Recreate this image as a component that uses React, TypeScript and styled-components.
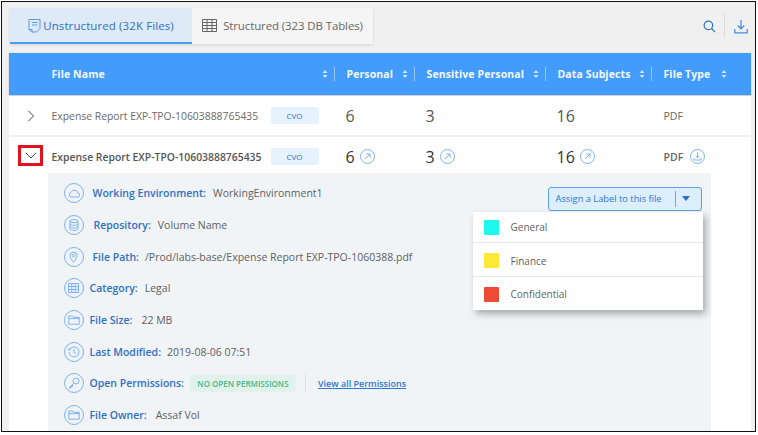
import * as React from 'react';
import styled, { createGlobalStyle } from 'styled-components';

const blue = '#2f6fc4';
const ringBlue = '#7fb2f5';

const GlobalStyle = createGlobalStyle`
    html, body {
        margin: 0;
        background: #fff;
        font-family: "Open Sans", "Liberation Sans", sans-serif;
    }
`;

const Frame = styled.div`
    box-sizing: border-box;
    position: relative;
    width: 755px;
    height: 431px;
    margin: 1px 0 0 1px;
    border: 1.5px solid #111;
    background: #f0f0f0;
    overflow: hidden;
`;

const TopBar = styled.div`
    display: flex;
    align-items: flex-start;
    justify-content: space-between;
    height: 51px;
    box-sizing: border-box;
    padding: 6px 7.5px 0 8px;
`;

const Tabs = styled.div`
    display: flex;
    box-shadow: 0 1px 3px rgba(0, 0, 0, 0.12);
    border-radius: 3px 3px 0 0;
`;

const Tab = styled.div<{ $active?: boolean }>`
    box-sizing: border-box;
    display: flex;
    align-items: center;
    justify-content: center;
    gap: ${({ $active }) => ($active ? '2px' : '6px')};
    width: ${({ $active }) => ($active ? '182px' : '181px')};
    height: 36px;
    font-size: 11.5px;
    letter-spacing: ${({ $active }) => ($active ? '0.1px' : '-0.12px')};
    color: ${({ $active }) => ($active ? blue : '#666')};
    background: ${({ $active }) => ($active ? '#deebf6' : '#f5f5f5')};
    border-bottom: 2px solid ${({ $active }) => ($active ? '#4a9bf5' : '#f5f5f5')};
`;

const Tools = styled.div`
    display: flex;
    align-items: center;
    gap: 8.5px;
    height: 24px;
    margin-top: 6px;
`;

const ToolDivider = styled.div`
    width: 1px;
    height: 24px;
    background: #dcdcdc;
`;

const Table = styled.div`
    width: 742px;
    margin-left: 6.5px;
`;

const columns = '43px 282px 80px 131px 106px 82px';

const HeaderRow = styled.div`
    display: grid;
    grid-template-columns: ${columns};
    height: 42px;
    align-items: center;
    background: #439bfb;
    box-shadow: 0 1px 2px rgba(0, 0, 0, 0.2);
`;

const HeaderCell = styled.div<{ $divided?: boolean }>`
    display: flex;
    align-items: center;
    justify-content: space-between;
    height: 14px;
    box-sizing: border-box;
    padding: 0 6px 0 ${({ $divided }) => ($divided ? '12px' : '0')};
    border-left: ${({ $divided }) => ($divided ? '1px solid rgba(255, 255, 255, 0.45)' : 'none')};
    font-size: 10.5px;
    font-weight: 700;
    letter-spacing: 0.1px;
    color: #f4f9ff;
`;

const DataRow = styled.div<{ $open?: boolean }>`
    box-sizing: border-box;
    display: grid;
    grid-template-columns: ${columns};
    align-items: center;
    height: ${({ $open }) => ($open ? '36px' : '41px')};
    margin-top: ${({ $open }) => ($open ? '0' : '1px')};
    padding-top: ${({ $open }) => ($open ? '3px' : '0')};
    background: #fff;
    border-bottom: ${({ $open }) => ($open ? 'none' : '2px solid #f0f0f0')};
    color: #555;
`;

const ChevronCell = styled.div`
    display: flex;
    justify-content: center;
    padding-left: 1px;
`;

const RedBox = styled.div`
    box-sizing: border-box;
    display: flex;
    align-items: center;
    justify-content: center;
    width: 25px;
    height: 21px;
    margin-bottom: 3px;
    border: 3px solid #e2121f;
`;

const NameCell = styled.div<{ $bold?: boolean }>`
    display: flex;
    align-items: center;
    font-size: 10.4px;
    font-weight: ${({ $bold }) => ($bold ? 600 : 400)};
    color: ${({ $bold }) => ($bold ? '#555' : '#6a6a6a')};
`;

const NameText = styled.span`
    width: 219px;
    white-space: nowrap;
`;

const SourceBadge = styled.span`
    display: flex;
    align-items: center;
    justify-content: center;
    width: 48px;
    height: 17px;
    background: #e6f2fd;
    border-radius: 2px;
    font-size: 8px;
    font-weight: 400;
    color: ${blue};
`;

const CountCell = styled.div<{ $bold?: boolean }>`
    display: flex;
    align-items: center;
    gap: 5px;
    padding-left: 12px;
    font-size: 16px;
    color: ${({ $bold }) => ($bold ? '#333' : '#555')};
`;

const TypeCell = styled.div<{ $bold?: boolean }>`
    display: flex;
    align-items: center;
    gap: 7px;
    padding-left: 13px;
    font-size: 10.5px;
    font-weight: ${({ $bold }) => ($bold ? 600 : 400)};
    color: #666;
`;

const TableBody = styled.div`
    background: #fff;
    padding-bottom: 20px;
`;

const Details = styled.div`
    position: relative;
    box-sizing: border-box;
    display: flex;
    flex-direction: column;
    width: 663px;
    margin-left: 39px;
    padding: 4.4px 0 0 16px;
    background: #f0f4f7;
`;

const DetailRow = styled.div`
    display: flex;
    align-items: center;
    height: 31.7px;
`;

const CircleIcon = styled.div<{ $small?: boolean }>`
    box-sizing: border-box;
    display: flex;
    align-items: center;
    justify-content: center;
    width: ${({ $small }) => ($small ? '15px' : '20px')};
    height: ${({ $small }) => ($small ? '15px' : '20px')};
    border: 1px solid ${ringBlue};
    border-radius: 50%;
    flex: none;
`;

const DetailLabel = styled.span<{ $indent: number }>`
    margin-left: ${({ $indent }) => $indent}px;
    font-size: 10.5px;
    font-weight: 600;
    color: ${blue};
    white-space: nowrap;
`;

const DetailValue = styled.span<{ $gap: number }>`
    margin-left: ${({ $gap }) => $gap}px;
    font-size: 10.5px;
    color: #5f5f5f;
    white-space: nowrap;
`;

const PermissionBadge = styled.span`
    display: flex;
    align-items: center;
    justify-content: center;
    width: 106px;
    height: 17px;
    margin-left: 6px;
    background: #e0f2ea;
    border-radius: 3px;
    font-size: 8px;
    font-weight: 600;
    color: #45b88a;
    white-space: nowrap;
`;

const PermissionDivider = styled.div`
    width: 1px;
    height: 18px;
    margin: 0 12px 0 9px;
    background: #dfe2e5;
`;

const PermissionLink = styled.a`
    font-size: 9px;
    font-weight: 600;
    color: #2f78d4;
    text-decoration: underline;
    white-space: nowrap;
`;

const LabelButton = styled.div`
    position: absolute;
    top: 13.5px;
    left: 500px;
    box-sizing: border-box;
    display: flex;
    align-items: center;
    width: 154px;
    height: 24px;
    padding-left: 7px;
    background: #ddeefc;
    border: 1px solid #5f9fe8;
    border-radius: 3px;
    font-size: 9.3px;
    color: #2a78d4;
    white-space: nowrap;
`;

const ButtonText = styled.span`
    width: 119px;
`;

const ButtonDivider = styled.div`
    width: 1px;
    height: 16px;
    margin-right: 6px;
    background: #6fa6e6;
`;

const ButtonCaret = styled.div`
    width: 0;
    height: 0;
    border-left: 4px solid transparent;
    border-right: 4px solid transparent;
    border-top: 5px solid ${blue};
`;

const LabelMenu = styled.div`
    position: absolute;
    top: 39px;
    left: 425px;
    width: 230px;
    background: #fff;
    box-shadow: 3px 4px 7px rgba(0, 0, 0, 0.3);
`;

const LabelOption = styled.div<{ $height: number; $inset: number; $last?: boolean }>`
    box-sizing: border-box;
    display: flex;
    align-items: center;
    gap: 12px;
    height: ${({ $height }) => $height}px;
    padding: ${({ $inset }) => $inset}px 0 0 11px;
    border-bottom: ${({ $last }) => ($last ? 'none' : '1px solid #e6e6e6')};
    font-size: 10px;
    color: #5f5f5f;
`;

const Swatch = styled.span<{ $color: string }>`
    width: 15px;
    height: 15px;
    border-radius: 1px;
    background: ${({ $color }) => $color};
`;

const SortIcon = () => (
    <svg width="6" height="10" viewBox="0 0 6 10">
        <path d="M3 1L5.5 4H.5z" fill="#cfe4fd" />
        <path d="M3 9L5.5 6H.5z" fill="#cfe4fd" />
    </svg>
);

const ChevronRight = () => (
    <svg width="8" height="12" viewBox="0 0 8 12" fill="none">
        <path d="M1.5 1L6.5 6L1.5 11" stroke="#2d3f8a" strokeWidth="1" />
    </svg>
);

const ChevronDown = () => (
    <svg width="12" height="7" viewBox="0 0 12 7" fill="none">
        <path d="M1 1L6 6L11 1" stroke="#444" strokeWidth="1" />
    </svg>
);

const LinkIcon = () => (
    <CircleIcon as="span" $small>
        <svg width="7" height="7" viewBox="0 0 7 7" fill="none">
            <path d="M1 6L6 1M2.2 1H6V4.8" stroke={ringBlue} strokeWidth="1" />
        </svg>
    </CircleIcon>
);

const DownloadBadge = () => (
    <CircleIcon as="span" $small>
        <svg width="9" height="9" viewBox="0 0 9 9" fill="none">
            <path d="M4.5 .5V5.5M2.5 3.8L4.5 5.8L6.5 3.8M1 6V8H8V6" stroke={ringBlue} strokeWidth="1" />
        </svg>
    </CircleIcon>
);

const FileTabIcon = () => (
    <svg width="13" height="15" viewBox="0 0 13 15" fill="none" stroke="#5a9be8" strokeWidth="1">
        <path d="M1 1.5H12V10.5L8.5 14H3.5L1 11.5z" />
        <path d="M4 4.5H9.5M4 7H9.5M1 11.5H4V14" />
    </svg>
);

const TableTabIcon = () => (
    <svg width="15" height="13" viewBox="0 0 15 13" fill="none" stroke="#666" strokeWidth="1">
        <path d="M.5 .5H14.5V12.5H.5zM.5 3.5H14.5M.5 6.5H14.5M.5 9.5H14.5M5 .5V12.5M10 .5V12.5" />
    </svg>
);

const SearchIcon = () => (
    <svg width="13" height="13" viewBox="0 0 14 14" fill="none" stroke="#2f6fc4" strokeWidth="1.3">
        <circle cx="5.8" cy="5.8" r="4.6" />
        <path d="M9.2 9.2L13 13" />
    </svg>
);

const DownloadIcon = () => (
    <svg width="14" height="15" viewBox="0 0 14 15" fill="none" stroke="#4a8fe0" strokeWidth="1.3">
        <path d="M7 1V9.5M3.8 6.5L7 9.8L10.2 6.5M.8 10V13.8H13.2V10" />
    </svg>
);

const iconStroke = { stroke: ringBlue, strokeWidth: 1, fill: 'none' };

const CloudGlyph = () => (
    <svg width="12" height="9" viewBox="0 0 12 9" {...iconStroke}>
        <path d="M3 8H9.5A2 2 0 0 0 9.8 4A3.5 3.5 0 0 0 3.2 3.2A2.5 2.5 0 0 0 3 8z" />
    </svg>
);

const DatabaseGlyph = () => (
    <svg width="10" height="12" viewBox="0 0 10 12" {...iconStroke}>
        <ellipse cx="5" cy="2.2" rx="4" ry="1.6" />
        <path d="M1 2.2V9.8C1 10.7 3 11.4 5 11.4S9 10.7 9 9.8V2.2M1 4.8C1 5.7 3 6.4 5 6.4S9 5.7 9 4.8M1 7.4C1 8.3 3 9 5 9S9 8.3 9 7.4" />
    </svg>
);

const PinGlyph = () => (
    <svg width="9" height="12" viewBox="0 0 9 12" {...iconStroke}>
        <path d="M4.5 11.2C2.5 8.8 1 7 1 4.6A3.5 3.5 0 0 1 8 4.6C8 7 6.5 8.8 4.5 11.2z" />
        <circle cx="4.5" cy="4.5" r="1.3" />
    </svg>
);

const GridGlyph = () => (
    <svg width="11" height="10" viewBox="0 0 11 10" {...iconStroke}>
        <path d="M.5 .5H10.5V9.5H.5zM.5 3.5H10.5M.5 6.5H10.5M3.8 .5V9.5M7.2 .5V9.5" />
    </svg>
);

const FolderGlyph = () => (
    <svg width="12" height="10" viewBox="0 0 12 10" {...iconStroke}>
        <path d="M.8 1H4.5L5.5 2.3H11.2V9.2H.8zM.8 3.6H11.2" />
    </svg>
);

const ClockGlyph = () => (
    <svg width="12" height="12" viewBox="0 0 12 12" {...iconStroke}>
        <path d="M1.6 3.5A5 5 0 1 1 1 6M.8 2V4H2.8M6 3V6.3L8 7.5" />
    </svg>
);

const KeyGlyph = () => (
    <svg width="12" height="12" viewBox="0 0 12 12" {...iconStroke}>
        <circle cx="8" cy="4" r="3" />
        <path d="M5.8 6.2L1 11H3V9.5H4.5V8" />
    </svg>
);

const sortedHeaders = ['Personal', 'Sensitive Personal', 'Data Subjects', 'File Type'];

const details = [
    { icon: <CloudGlyph />, label: 'Working Environment:', value: 'WorkingEnvironment1', indent: 9, gap: 7 },
    { icon: <DatabaseGlyph />, label: 'Repository:', value: 'Volume Name', indent: 10, gap: 7 },
    {
        icon: <PinGlyph />,
        label: 'File Path:',
        value: '/Prod/labs-base/Expense Report EXP-TPO-1060388.pdf',
        indent: 9,
        gap: 6,
    },
    { icon: <GridGlyph />, label: 'Category:', value: 'Legal', indent: 6, gap: 7 },
    { icon: <FolderGlyph />, label: 'File Size:', value: '22 MB', indent: 6, gap: 9 },
    { icon: <ClockGlyph />, label: 'Last Modified:', value: '2019-08-06 07:51', indent: 6, gap: 6 },
];

const labels = [
    { name: 'General', color: '#1ef7ee', height: 31, inset: 0 },
    { name: 'Finance', color: '#ffe838', height: 34, inset: 2 },
    { name: 'Confidential', color: '#ee4b35', height: 33, inset: 1 },
];

export default function App() {
    return (
        <>
            <GlobalStyle />
            <Frame>
                <TopBar>
                    <Tabs>
                        <Tab $active>
                            <FileTabIcon />
                            Unstructured (32K Files)
                        </Tab>
                        <Tab>
                            <TableTabIcon />
                            Structured (323 DB Tables)
                        </Tab>
                    </Tabs>
                    <Tools>
                        <SearchIcon />
                        <ToolDivider />
                        <DownloadIcon />
                    </Tools>
                </TopBar>
                <Table>
                    <HeaderRow>
                        <span />
                        <HeaderCell>
                            File Name
                            <SortIcon />
                        </HeaderCell>
                        {sortedHeaders.map((title) => (
                            <HeaderCell $divided key={title}>
                                {title}
                                <SortIcon />
                            </HeaderCell>
                        ))}
                    </HeaderRow>
                    <TableBody>
                        <DataRow>
                            <ChevronCell>
                                <ChevronRight />
                            </ChevronCell>
                            <NameCell>
                                <NameText>Expense Report EXP-TPO-10603888765435</NameText>
                                <SourceBadge>CVO</SourceBadge>
                            </NameCell>
                            <CountCell>6</CountCell>
                            <CountCell>3</CountCell>
                            <CountCell>16</CountCell>
                            <TypeCell>PDF</TypeCell>
                        </DataRow>
                        <DataRow $open>
                            <ChevronCell>
                                <RedBox>
                                    <ChevronDown />
                                </RedBox>
                            </ChevronCell>
                            <NameCell $bold>
                                <NameText>Expense Report EXP-TPO-10603888765435</NameText>
                                <SourceBadge>CVO</SourceBadge>
                            </NameCell>
                            <CountCell $bold>
                                6
                                <LinkIcon />
                            </CountCell>
                            <CountCell $bold>
                                3
                                <LinkIcon />
                            </CountCell>
                            <CountCell $bold>
                                16
                                <LinkIcon />
                            </CountCell>
                            <TypeCell $bold>
                                PDF
                                <DownloadBadge />
                            </TypeCell>
                        </DataRow>
                        <Details>
                            {details.map((item) => (
                                <DetailRow key={item.label}>
                                    <CircleIcon>{item.icon}</CircleIcon>
                                    <DetailLabel $indent={item.indent}>{item.label}</DetailLabel>
                                    <DetailValue $gap={item.gap}>{item.value}</DetailValue>
                                </DetailRow>
                            ))}
                            <DetailRow>
                                <CircleIcon>
                                    <KeyGlyph />
                                </CircleIcon>
                                <DetailLabel $indent={6}>Open Permissions:</DetailLabel>
                                <PermissionBadge>NO OPEN PERMISSIONS</PermissionBadge>
                                <PermissionDivider />
                                <PermissionLink>View all Permissions</PermissionLink>
                            </DetailRow>
                            <DetailRow>
                                <CircleIcon>
                                    <FolderGlyph />
                                </CircleIcon>
                                <DetailLabel $indent={6}>File Owner:</DetailLabel>
                                <DetailValue $gap={9}>Assaf Vol</DetailValue>
                            </DetailRow>
                            <LabelButton>
                                <ButtonText>Assign a Label to this file</ButtonText>
                                <ButtonDivider />
                                <ButtonCaret />
                            </LabelButton>
                            <LabelMenu>
                                {labels.map((label, index) => (
                                    <LabelOption
                                        key={label.name}
                                        $height={label.height}
                                        $inset={label.inset}
                                        $last={index === labels.length - 1}
                                    >
                                        <Swatch $color={label.color} />
                                        {label.name}
                                    </LabelOption>
                                ))}
                            </LabelMenu>
                        </Details>
                    </TableBody>
                </Table>
            </Frame>
        </>
    );
}
